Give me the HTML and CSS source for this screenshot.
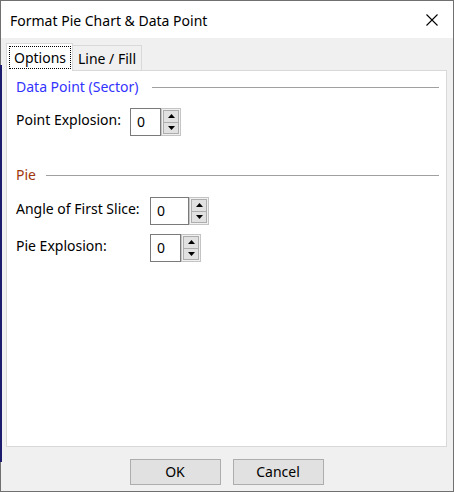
FILE: index.html
```html
<!DOCTYPE html>
<html>
<head>
<meta charset="utf-8">
<title>Format Pie Chart &amp; Data Point</title>
<link rel="stylesheet" href="styles.css">
</head>
<body>
<div class="window">
  <div class="titlebar">
    <span class="title">Format Pie Chart &amp; Data Point</span>
    <svg class="close" width="12" height="12" viewBox="0 0 12 12"><path d="M0.5 0.5 L11.5 11.5 M11.5 0.5 L0.5 11.5" stroke="#000" stroke-width="1.1" fill="none"/></svg>
  </div>
  <div class="client">
    <div class="tabs">
      <div class="tab tab-active"><span class="focus">Options</span></div>
      <div class="tab tab-idle">Line / Fill</div>
    </div>
    <div class="panel">
      <div class="group-head head-blue"><span>Data Point (Sector)</span><i class="rule rule-wide"></i></div>
      <div class="row row-first">
        <span class="lbl lbl-short">Point Explosion:</span>
        <div class="spin">
          <div class="field field-a">0</div>
          <div class="spin-col">
            <div class="spin-btn"><svg width="7" height="4" viewBox="0 0 7 4"><path d="M3.5 0 L7 4 L0 4 Z" fill="#000"/></svg></div>
            <div class="spin-btn"><svg width="7" height="4" viewBox="0 0 7 4"><path d="M0 0 L7 0 L3.5 4 Z" fill="#000"/></svg></div>
          </div>
        </div>
      </div>
      <div class="group-head head-red head-pie"><span>Pie</span><i class="rule rule-narrow"></i></div>
      <div class="row row-second">
        <span class="lbl lbl-long">Angle of First Slice:</span>
        <div class="spin">
          <div class="field field-b">0</div>
          <div class="spin-col">
            <div class="spin-btn"><svg width="7" height="4" viewBox="0 0 7 4"><path d="M3.5 0 L7 4 L0 4 Z" fill="#000"/></svg></div>
            <div class="spin-btn"><svg width="7" height="4" viewBox="0 0 7 4"><path d="M0 0 L7 0 L3.5 4 Z" fill="#000"/></svg></div>
          </div>
        </div>
      </div>
      <div class="row row-third">
        <span class="lbl lbl-long">Pie Explosion:</span>
        <div class="spin">
          <div class="field field-a">0</div>
          <div class="spin-col">
            <div class="spin-btn"><svg width="7" height="4" viewBox="0 0 7 4"><path d="M3.5 0 L7 4 L0 4 Z" fill="#000"/></svg></div>
            <div class="spin-btn"><svg width="7" height="4" viewBox="0 0 7 4"><path d="M0 0 L7 0 L3.5 4 Z" fill="#000"/></svg></div>
          </div>
        </div>
      </div>
    </div>
    <div class="buttons">
      <button class="btn">OK</button>
      <button class="btn">Cancel</button>
    </div>
  </div>
  <div class="backstrip"></div>
</div>
</body>
</html>
```

FILE: styles.css
```css
html, body {
  margin: 0;
  padding: 0;
  background: #f0f0f0;
}

body {
  font-family: "Noto Sans", "Open Sans", sans-serif;
  font-size: 14px;
  color: #000;
}

.window {
  position: relative;
  width: 454px;
  height: 492px;
  box-sizing: border-box;
  border: 1px solid #707070;
  background: #f0f0f0;
  display: flex;
  flex-direction: column;
}

.titlebar {
  height: 37px;
  flex: none;
  background: #fff;
  display: flex;
  align-items: center;
  justify-content: space-between;
  padding: 0 15px 0 9px;
}

.title {
  line-height: 19px;
  margin-top: 1px;
}

.close {
  display: block;
}

.client {
  flex: 1;
  display: flex;
  flex-direction: column;
  padding: 5px 6px 6px 5px;
  min-height: 0;
}

.tabs {
  display: flex;
  align-items: flex-end;
  height: 27px;
  flex: none;
}

.tab {
  box-sizing: border-box;
  border: 1px solid #d9d9d9;
  border-bottom: none;
  text-align: center;
  line-height: 19px;
}

.tab-active {
  position: relative;
  z-index: 1;
  width: 67px;
  height: 28px;
  margin-bottom: -1px;
  background: #fff;
  padding: 2px 1px 0 2px;
}

.focus {
  display: block;
  height: 23px;
  box-sizing: border-box;
  border: 1px dotted #000;
  padding-top: 1px;
}

.tab-idle {
  width: 69px;
  height: 25px;
  border-left: none;
  background: #f0f0f0;
  padding-top: 3px;
}

.panel {
  flex: 1;
  background: #fff;
  border: 1px solid #d9d9d9;
  padding: 0 7px 0 9px;
  display: flex;
  flex-direction: column;
}

.group-head {
  display: flex;
  align-items: center;
  height: 20px;
  line-height: 20px;
  margin-top: 6px;
}

.head-blue {
  color: #3333ff;
}

.head-red {
  color: #a0380e;
}

.head-pie {
  margin-top: 29px;
}

.rule {
  flex: 1;
  height: 1px;
  background: #a0a0a0;
  margin-top: 1px;
}

.rule-wide {
  margin-left: 13px;
}

.rule-narrow {
  margin-left: 10px;
}

.row {
  display: flex;
  align-items: center;
  height: 28px;
}

.row-first {
  margin-top: 11px;
}

.row-second {
  margin-top: 12px;
}

.row-third {
  margin-top: 9px;
}

.lbl {
  line-height: 20px;
  margin-bottom: 4px;
  flex: none;
}

.lbl-short {
  width: 114px;
}

.lbl-long {
  width: 134px;
}

.spin {
  display: flex;
  height: 28px;
}

.field {
  box-sizing: border-box;
  border: 1px solid #7a7a7a;
  background: #fff;
  padding-left: 6px;
  line-height: 26px;
}

.field-a {
  width: 31px;
}

.field-b {
  width: 39px;
}

.spin-col {
  width: 20px;
  box-sizing: border-box;
  border: 1px solid #c4c4c4;
  background: #f0f0f0;
  display: flex;
  flex-direction: column;
  padding: 1px;
}

.spin-btn {
  flex: 1;
  box-sizing: border-box;
  border: 1px solid #adadad;
  background: #e1e1e1;
  display: flex;
  align-items: center;
  justify-content: center;
}

.spin-btn + .spin-btn {
  margin-top: -1px;
}

.spin-btn svg {
  display: block;
}

.buttons {
  display: flex;
  justify-content: center;
  gap: 12px;
  margin-top: 12px;
  flex: none;
}

.btn {
  width: 91px;
  height: 26px;
  box-sizing: border-box;
  border: 1px solid #adadad;
  background: #e1e1e1;
  font-family: "Noto Sans", "Open Sans", sans-serif;
  font-size: 14px;
  color: #000;
  padding: 0;
  line-height: 22px;
}

.backstrip {
  position: absolute;
  left: -1px;
  top: 64px;
  width: 2px;
  height: 397px;
  background: #1c1c6e;
}
```
